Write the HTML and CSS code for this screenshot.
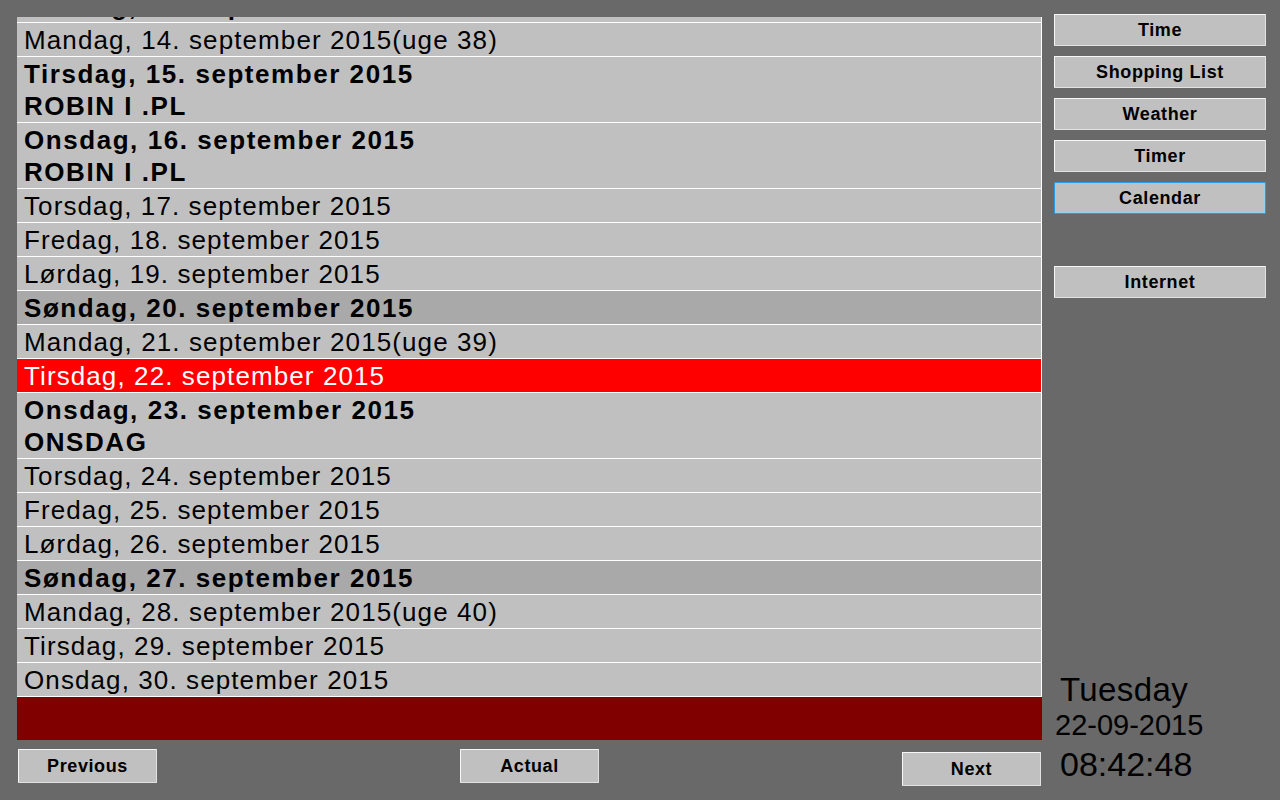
FILE: index.html
```html
<!DOCTYPE html>
<html lang="da">
<head>
<meta charset="utf-8">
<title>Calendar</title>
<link rel="stylesheet" href="styles.css">
</head>
<body>
<div class="app">
  <div class="main">
    <div class="list">
      <div class="rows">
        <div class="row first bold">Søndag, 13. september 2015</div>
        <div class="row">Mandag, 14. september 2015(uge 38)</div>
        <div class="row bold">Tirsdag, 15. september 2015<br>ROBIN I .PL</div>
        <div class="row bold">Onsdag, 16. september 2015<br>ROBIN I .PL</div>
        <div class="row">Torsdag, 17. september 2015</div>
        <div class="row">Fredag, 18. september 2015</div>
        <div class="row">Lørdag, 19. september 2015</div>
        <div class="row bold sunday">Søndag, 20. september 2015</div>
        <div class="row">Mandag, 21. september 2015(uge 39)</div>
        <div class="row today">Tirsdag, 22. september 2015</div>
        <div class="row bold">Onsdag, 23. september 2015<br>ONSDAG</div>
        <div class="row">Torsdag, 24. september 2015</div>
        <div class="row">Fredag, 25. september 2015</div>
        <div class="row">Lørdag, 26. september 2015</div>
        <div class="row bold sunday">Søndag, 27. september 2015</div>
        <div class="row">Mandag, 28. september 2015(uge 40)</div>
        <div class="row">Tirsdag, 29. september 2015</div>
        <div class="row">Onsdag, 30. september 2015</div>
      </div>
    </div>
    <div class="footer-band"></div>
    <div class="nav">
      <button class="btn nav-btn">Previous</button>
      <button class="btn nav-btn">Actual</button>
      <button class="btn nav-btn next">Next</button>
    </div>
  </div>
  <div class="side">
    <button class="btn side-btn">Time</button>
    <button class="btn side-btn">Shopping List</button>
    <button class="btn side-btn">Weather</button>
    <button class="btn side-btn">Timer</button>
    <button class="btn side-btn focused">Calendar</button>
    <div class="side-spacer"></div>
    <button class="btn side-btn">Internet</button>
    <div class="clock">
      <div class="clock-day">Tuesday</div>
      <div class="clock-date">22-09-2015</div>
      <div class="clock-time">08:42:48</div>
    </div>
  </div>
</div>
</body>
</html>
```

FILE: styles.css
```css
html, body {
  margin: 0;
  padding: 0;
}

body {
  width: 1280px;
  height: 800px;
  overflow: hidden;
  background: #696969;
  font-family: "Liberation Sans", Arial, sans-serif;
  color: #000;
}

.app {
  display: flex;
  height: 800px;
}

.main {
  width: 1025px;
  margin-left: 17px;
  padding-top: 17px;
  display: flex;
  flex-direction: column;
}

.list {
  height: 680px;
  overflow: hidden;
  border-right: 1px solid #ffffff;
  background: #c0c0c0;
}

.rows {
  display: flex;
  flex-direction: column;
}

.row {
  background: #c0c0c0;
  border-bottom: 1px solid #ffffff;
  font-size: 26px;
  line-height: 32px;
  letter-spacing: 1.1px;
  padding: 1px 0 0 7px;
  white-space: nowrap;
}

.row.first {
  margin-top: -28px;
}

.row.bold {
  font-weight: bold;
  letter-spacing: 1.55px;
}

.row.sunday {
  background: #a9a9a9;
}

.row.today {
  background: #ff0000;
  color: #ffffff;
}

.footer-band {
  height: 43px;
  background: #800000;
}

.nav {
  display: flex;
  justify-content: space-between;
  align-items: flex-start;
  padding-top: 9px;
  margin-left: 1px;
  width: 1023px;
}

.btn {
  box-sizing: border-box;
  background: #c0c0c0;
  border: 1px solid #f6f6f6;
  border-right-color: #e2e2e2;
  border-bottom-color: #e2e2e2;
  border-radius: 1px;
  font-family: "Liberation Sans", Arial, sans-serif;
  font-weight: bold;
  font-size: 18px;
  letter-spacing: 0.6px;
  color: #000;
  padding: 0;
  margin: 0;
  display: flex;
  align-items: center;
  justify-content: center;
}

.nav-btn {
  width: 139px;
  height: 34px;
}

.nav-btn.next {
  margin-top: 3px;
}

.side {
  width: 212px;
  margin-left: 12px;
  padding-top: 14px;
  display: flex;
  flex-direction: column;
  gap: 10px;
}

.side-btn {
  width: 212px;
  height: 32px;
}

.side-btn.focused {
  border: 1px solid #2a9be0;
  box-shadow: inset 0 0 0 1px #8fd0f4;
}

.side-spacer {
  height: 32px;
}

.clock {
  margin-top: auto;
  padding-bottom: 17px;
  display: flex;
  flex-direction: column;
}

.clock-day {
  font-size: 33px;
  line-height: 36px;
  padding-left: 6px;
  letter-spacing: 0.4px;
}

.clock-date {
  font-size: 29px;
  line-height: 32px;
  margin-top: 1px;
  padding-left: 1px;
}

.clock-time {
  font-size: 34px;
  line-height: 38px;
  margin-top: 4px;
  padding-left: 6px;
}
```
